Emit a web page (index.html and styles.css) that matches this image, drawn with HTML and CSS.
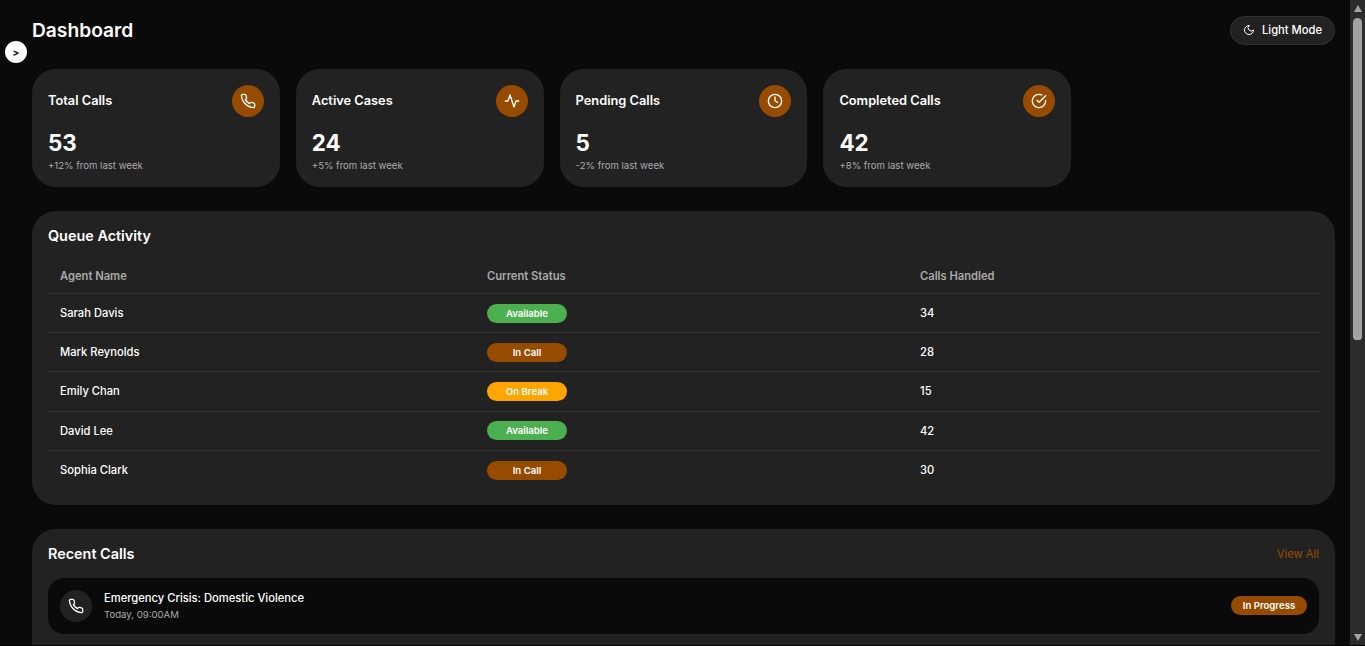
FILE: index.html
```html
<!DOCTYPE html>
<html lang="en">
<head>
  <meta charset="UTF-8">
  <title>Dashboard</title>
  <link rel="stylesheet" href="styles.css">
</head>
<body>

  <button class="sidebar-toggle">&gt;</button>

  <main class="content">
    <header class="page-header">
      <h1>Dashboard</h1>
      <button class="theme-button">
        <svg class="icon-small" viewBox="0 0 24 24"><path d="M12 3a6 6 0 0 0 9 9 9 9 0 1 1-9-9Z"/></svg>
        Light Mode
      </button>
    </header>

    <section class="stats">
      <div class="stat-card">
        <div class="stat-top">
          <h3>Total Calls</h3>
          <span class="stat-icon">
            <svg class="icon" viewBox="0 0 24 24"><path d="M22 16.92v3a2 2 0 0 1-2.18 2 19.79 19.79 0 0 1-8.63-3.07 19.5 19.5 0 0 1-6-6 19.79 19.79 0 0 1-3.07-8.67A2 2 0 0 1 4.11 2h3a2 2 0 0 1 2 1.72 12.84 12.84 0 0 0 .7 2.81 2 2 0 0 1-.45 2.11L8.09 9.91a16 16 0 0 0 6 6l1.27-1.27a2 2 0 0 1 2.11-.45 12.84 12.84 0 0 0 2.81.7A2 2 0 0 1 22 16.92Z"/></svg>
          </span>
        </div>
        <div class="stat-value">53</div>
        <div class="stat-note">+12% from last week</div>
      </div>
      <div class="stat-card">
        <div class="stat-top">
          <h3>Active Cases</h3>
          <span class="stat-icon">
            <svg class="icon" viewBox="0 0 24 24"><path d="M22 12h-4l-3 9L9 3l-3 9H2"/></svg>
          </span>
        </div>
        <div class="stat-value">24</div>
        <div class="stat-note">+5% from last week</div>
      </div>
      <div class="stat-card">
        <div class="stat-top">
          <h3>Pending Calls</h3>
          <span class="stat-icon">
            <svg class="icon" viewBox="0 0 24 24"><circle cx="12" cy="12" r="10"/><path d="M12 6v6l4 2"/></svg>
          </span>
        </div>
        <div class="stat-value">5</div>
        <div class="stat-note">-2% from last week</div>
      </div>
      <div class="stat-card">
        <div class="stat-top">
          <h3>Completed Calls</h3>
          <span class="stat-icon">
            <svg class="icon" viewBox="0 0 24 24"><path d="M22 11.08V12a10 10 0 1 1-5.93-9.14"/><path d="M22 4 12 14.01l-3-3"/></svg>
          </span>
        </div>
        <div class="stat-value">42</div>
        <div class="stat-note">+8% from last week</div>
      </div>
    </section>

    <section class="panel">
      <h2>Queue Activity</h2>
      <table class="queue-table">
        <colgroup>
          <col class="col-name">
          <col class="col-status">
          <col>
        </colgroup>
        <thead>
          <tr><th>Agent Name</th><th>Current Status</th><th>Calls Handled</th></tr>
        </thead>
        <tbody>
          <tr><td>Sarah Davis</td><td><span class="badge green">Available</span></td><td>34</td></tr>
          <tr><td>Mark Reynolds</td><td><span class="badge brown">In Call</span></td><td>28</td></tr>
          <tr><td>Emily Chan</td><td><span class="badge orange">On Break</span></td><td>15</td></tr>
          <tr><td>David Lee</td><td><span class="badge green">Available</span></td><td>42</td></tr>
          <tr><td>Sophia Clark</td><td><span class="badge brown">In Call</span></td><td>30</td></tr>
        </tbody>
      </table>
    </section>

    <section class="panel">
      <div class="panel-top">
        <h2>Recent Calls</h2>
        <a class="view-all" href="#">View All</a>
      </div>
      <div class="call-list">
        <div class="call-item">
          <span class="call-icon"><svg class="icon" viewBox="0 0 24 24"><path d="M22 16.92v3a2 2 0 0 1-2.18 2 19.79 19.79 0 0 1-8.63-3.07 19.5 19.5 0 0 1-6-6 19.79 19.79 0 0 1-3.07-8.67A2 2 0 0 1 4.11 2h3a2 2 0 0 1 2 1.72 12.84 12.84 0 0 0 .7 2.81 2 2 0 0 1-.45 2.11L8.09 9.91a16 16 0 0 0 6 6l1.27-1.27a2 2 0 0 1 2.11-.45 12.84 12.84 0 0 0 2.81.7A2 2 0 0 1 22 16.92Z"/></svg></span>
          <div class="call-text">
            <div class="call-title">Emergency Crisis: Domestic Violence</div>
            <div class="call-time">Today, 09:00AM</div>
          </div>
          <span class="badge call-badge brown">In Progress</span>
        </div>
        <div class="call-item"></div>
      </div>
    </section>
  </main>

  <!-- scrollbar of the window, headless browser doesn't draw one -->
  <div class="scrollbar">
    <span class="arrow-up"></span>
    <span class="thumb"></span>
    <span class="arrow-down"></span>
  </div>

</body>
</html>
```

FILE: styles.css
```css
html {
  height: 100%;
  background-color: #000;
}
body {
  display: flex;
  box-sizing: border-box;
  height: calc(100vh - 1px);
  margin: 0;
  overflow: hidden;
  background-color: #0a0a0a;
  color: #fff;
  font-family: 'Inter', 'Liberation Sans', sans-serif;
}

.scrollbar {
  display: flex;
  flex-direction: column;
  align-items: center;
  flex: 0 0 15px;
  background-color: #2c2c2c;
}
.arrow-up, .arrow-down {
  width: 0;
  height: 0;
  border-left: 4.5px solid transparent;
  border-right: 4.5px solid transparent;
}
.arrow-up {
  margin-top: 5px;
  border-bottom: 7px solid #a3a3a3;
}
.thumb {
  width: 9px;
  height: 322px;
  margin-top: 6px;
  background-color: #a3a3a3;
  border-radius: 5px 5px 4px 4px;
}
.arrow-down {
  margin-top: auto;
  margin-bottom: 4px;
  border-top: 7px solid #a3a3a3;
}

.sidebar-toggle {
  position: fixed;
  top: 41px;
  left: 5px;
  width: 22px;
  height: 22px;
  padding: 0;
  background-color: #fff;
  color: #0a0a0a;
  border: none;
  border-radius: 50%;
  font-family: inherit;
  font-size: 10px;
  font-weight: 700;
  cursor: pointer;
}

.content {
  flex: 1;
  min-width: 0;
  overflow: hidden;
  padding: 16px 15px 16px 32px;
}

.page-header {
  display: flex;
  align-items: center;
  justify-content: space-between;
  height: 29px;
  margin-bottom: 24px;
}
h1 {
  margin: 0 0 2px;
  font-size: 19.2px;
  font-weight: 600;
}
.theme-button {
  display: flex;
  align-items: center;
  gap: 7px;
  box-sizing: border-box;
  width: 105px;
  height: 29px;
  padding: 0 12px 1px;
  background-color: #222;
  color: #fff;
  border: 1px solid #333;
  border-radius: 15px;
  font-family: inherit;
  font-size: 11.2px;
  font-weight: 500;
  white-space: nowrap;
  cursor: pointer;
}

.icon, .icon-small {
  fill: none;
  stroke: currentColor;
  stroke-width: 2;
  stroke-linecap: round;
  stroke-linejoin: round;
}
.icon {
  width: 16px;
  height: 16px;
}
.icon-small {
  flex: none;
  width: 12px;
  height: 12px;
}

.stats {
  display: grid;
  grid-template-columns: repeat(5, 1fr);
  gap: 16px;
  margin-bottom: 24px;
}
.stat-card {
  height: 118px;
  box-sizing: border-box;
  padding: 16px;
  background-color: #222;
  border-radius: 24px;
}
.stat-top {
  display: flex;
  align-items: center;
  justify-content: space-between;
  height: 32px;
  margin-bottom: 12px;
}
.stat-top h3 {
  margin: 0 0 2px;
  font-size: 12.8px;
  font-weight: 600;
}
.stat-icon {
  display: flex;
  align-items: center;
  justify-content: center;
  width: 32px;
  height: 32px;
  background-color: #964b00;
  border-radius: 50%;
}
.stat-value {
  font-size: 22.4px;
  font-weight: 700;
  line-height: 28px;
}
.stat-note {
  margin-top: 2px;
  color: #aaa;
  font-size: 9.6px;
  line-height: 14px;
}

.panel {
  margin-bottom: 24px;
  padding: 16px;
  background-color: #222;
  border-radius: 24px;
}
h2 {
  margin: 0;
  font-size: 14.4px;
  font-weight: 600;
  line-height: 18px;
}

.queue-table {
  width: 100%;
  margin-top: 14px;
  border-collapse: collapse;
  table-layout: fixed;
  font-size: 11.2px;
}
.col-name {
  width: 427px;
}
.col-status {
  width: 433px;
}
.queue-table th {
  height: 34px;
  padding: 0 12px;
  color: #aaa;
  font-weight: 600;
  text-align: left;
  border-bottom: 1px solid #333;
}
.queue-table td {
  height: 39.2px;
  box-sizing: border-box;
  padding: 0 12px;
  font-weight: 500;
  border-bottom: 1px solid #333;
}
.queue-table tr:last-child td {
  border-bottom: none;
}

.badge {
  display: inline-block;
  width: 80px;
  height: 19px;
  border-radius: 10px;
  color: #fff;
  font-size: 9.6px;
  font-weight: 600;
  line-height: 19px;
  text-align: center;
  vertical-align: middle;
}
.green {
  background-color: #4caf50;
}
.brown {
  background-color: #964b00;
}
.orange {
  background-color: #ffa500;
}

.panel-top {
  display: flex;
  align-items: center;
  justify-content: space-between;
}
.view-all {
  color: #964b00;
  font-size: 11.2px;
  text-decoration: none;
}
.call-list {
  display: flex;
  flex-direction: column;
  gap: 12px;
  margin-top: 15px;
}
.call-item {
  display: flex;
  align-items: center;
  gap: 12px;
  height: 56px;
  padding: 0 12px;
  background-color: #0a0a0a;
  border-radius: 16px;
}
.call-icon {
  display: flex;
  align-items: center;
  justify-content: center;
  width: 32px;
  height: 32px;
  background-color: #222;
  border-radius: 50%;
}
.call-text {
  flex: 1;
}
.call-title {
  font-size: 11.2px;
  font-weight: 500;
  line-height: 16px;
}
.call-time {
  color: #aaa;
  font-size: 9.6px;
  line-height: 14px;
  margin-top: 2px;
}
.call-badge {
  width: 76px;
  margin-bottom: 1px;
}
```
